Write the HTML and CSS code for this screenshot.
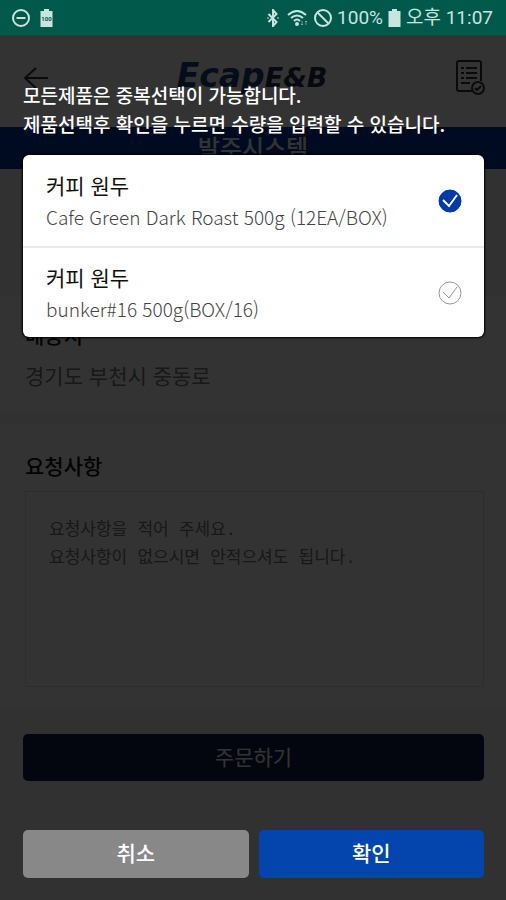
FILE: index.html
```html
<!DOCTYPE html>
<html lang="ko">
<head>
<meta charset="utf-8">
<meta name="viewport" content="width=device-width, initial-scale=1">
<title>발주시스템</title>
<link rel="stylesheet" href="styles.css">
</head>
<body>
<div class="status-bar">
  <div class="status-group">
    <svg class="status-ring" viewBox="0 0 18 18" aria-hidden="true"><circle cx="9" cy="9" r="8"/><path d="M4.500 9h9"/></svg>
    <span class="battery-badge"><svg viewBox="0 0 13 18" aria-hidden="true"><path d="M4 0h5v2h3.500v16H.5V2H4z"/></svg><span class="battery-label">100</span></span>
  </div>
  <div class="status-group status-right">
    <svg class="bluetooth" viewBox="0 0 12 18" aria-hidden="true"><path d="M1.500 5l8 8L6 17V1l3.500 4-8 8"/><path d="M.5 9h1M10.500 9h1"/></svg>
    <svg class="wifi" viewBox="0 0 22 18" aria-hidden="true"><path d="M1 6q9-8 18 0M4 9q6-5 12 0M7 12q3-3 6 0"/><circle cx="10" cy="15" r="1"/><path class="wifi-arrows" d="M15 12v4m-1-1l1 1 1-1M19 16v-4m-1 1l1-1 1 1"/></svg>
    <svg class="status-ring" viewBox="0 0 18 18" aria-hidden="true"><circle cx="9" cy="9" r="8"/><path d="M3.500 3.500l11 11"/></svg>
    <span>100%</span>
    <svg class="battery" viewBox="0 0 13 18" aria-hidden="true"><path d="M4 0h5v2h3.500v16H.5V2H4z"/></svg>
    <span>오후 11:07</span>
  </div>
</div>
<div class="screen">
  <div class="page">
    <header class="app-header">
      <button class="icon-button" type="button" aria-label="뒤로"><svg class="back-icon" viewBox="0 0 26 24"><path d="M25 13H2M13 3L2 13l11 10"/></svg></button>
      <div class="logo"><span class="logo-name">Ecap</span><span class="logo-suffix">E&amp;B</span></div>
      <button class="icon-button" type="button" aria-label="주문내역"><svg class="list-icon" viewBox="0 0 30 36"><path d="M17 32H4q-2 0-2-2V4q0-2 2-2h20q2 0 2 2v18M6 9h3M11 9h11M6 14h3M11 14h11M6 19h3M11 19h11M6 24h9"/><circle cx="23" cy="29" r="6"/><path d="M20 29l2 2 4-4"/></svg></button>
    </header>
    <h1 class="banner">발주시스템</h1>
    <div class="product-space"></div>
    <section class="section address">
      <h2>배송지</h2>
      <p>경기도 부천시 중동로</p>
    </section>
    <section class="section request">
      <h2><label for="request">요청사항</label></h2>
      <textarea id="request" placeholder="요청사항을 적어 주세요.&#10;요청사항이 없으시면 안적으셔도 됩니다."></textarea>
    </section>
    <div class="order-row"><button class="order-button" type="button">주문하기</button></div>
  </div>
  <div class="overlay" role="dialog" aria-modal="true" aria-labelledby="guide">
    <p class="guide" id="guide">모든제품은 중복선택이 가능합니다.<br>제품선택후 확인을 누르면 수량을 입력할 수 있습니다.</p>
    <div class="product-list">
      <label class="product">
        <span class="product-text"><span class="product-name">커피 원두</span><span class="product-detail">Cafe Green Dark Roast 500g (12EA/BOX)</span></span>
        <input class="check-input" type="checkbox" checked>
        <svg class="check" viewBox="0 0 24 24" aria-hidden="true"><circle cx="12" cy="12" r="11"/><path d="M5 11l6 6 8-11"/></svg>
      </label>
      <label class="product">
        <span class="product-text"><span class="product-name">커피 원두</span><span class="product-detail">bunker#16 500g(BOX/16)</span></span>
        <input class="check-input" type="checkbox">
        <svg class="check" viewBox="0 0 24 24" aria-hidden="true"><circle cx="12" cy="12" r="11"/><path d="M5 11l6 6 8-11"/></svg>
      </label>
    </div>
    <div class="actions">
      <button class="cancel" type="button">취소</button>
      <button class="confirm" type="button">확인</button>
    </div>
  </div>
</div>
</body>
</html>
```
FILE: styles.css
```css
* { box-sizing: border-box; }
body {
  margin: 0;
  min-height: 100vh;
  display: flex;
  flex-direction: column;
  font-family: "Noto Sans CJK KR", sans-serif;
  color: #111;
}
h1, h2, p { margin: 0; }
button { border: 0; padding: 0; font: inherit; }
svg { display: block; fill: none; stroke: currentColor; }

.status-bar {
  display: flex;
  justify-content: space-between;
  align-items: center;
  height: 35px;
  padding: 0 13px 0 12px;
  background: #00594b;
  color: #c9e5e0;
  font-family: Roboto, "Noto Sans CJK KR", sans-serif;
  font-size: 19px;
  line-height: 22px;
}
.status-group { display: flex; align-items: center; gap: 10px; }
.status-right { gap: 5px; }
.status-ring { width: 18px; height: 18px; stroke-width: 2; }
.battery-badge { position: relative; }
.battery-badge svg, .battery { width: 13px; height: 18px; fill: currentColor; stroke: none; }
.battery-label {
  position: absolute;
  inset: 6px 0 auto;
  text-align: center;
  font-size: 6px;
  line-height: 8px;
  font-weight: 700;
  color: #00594b;
}
.bluetooth { width: 12px; height: 18px; stroke-width: 2; margin-right: 3px; }
.wifi { width: 22px; height: 18px; stroke-width: 2; }
.wifi-arrows { stroke-width: 1; opacity: .5; }

.screen {
  position: relative;
  flex: 1;
  display: flex;
  flex-direction: column;
}
.page {
  flex: 1;
  display: flex;
  flex-direction: column;
  background: #f2f2f2;
}
.app-header {
  display: flex;
  justify-content: space-between;
  align-items: center;
  height: 92px;
  padding: 0 21px 8px 23px;
  background: #fff;
}
.icon-button { background: none; color: #333; }
.back-icon { width: 26px; height: 24px; stroke-width: 2; }
.list-icon { width: 30px; height: 36px; stroke-width: 2; }
.logo {
  display: flex;
  align-items: baseline;
  font-family: "DejaVu Sans", sans-serif;
  font-style: italic;
  font-weight: 700;
  line-height: 40px;
  color: #1c3c84;
}
.logo-name { font-size: 33px; }
.logo-suffix { font-size: 27px; color: #26304f; }
.banner {
  height: 42px;
  background: #0032a0;
  color: #fff;
  text-align: center;
  font-size: 24px;
  line-height: 40px;
  font-weight: 500;
}
.product-space { height: 126px; }
.section { background: #fff; padding: 0 22px 0 25px; }
.section h2 { font-size: 21px; line-height: 30px; font-weight: 500; }
.address { height: 118px; padding-top: 24px; }
.address p { margin-top: 11px; font-size: 21px; line-height: 30px; color: #777; }
.request { margin-top: 12px; height: 284px; padding-top: 25px; }
.request textarea {
  display: block;
  width: 100%;
  height: 196px;
  margin-top: 11px;
  padding: 25px 23px;
  border: 1px solid #e2e2e2;
  background: transparent;
  resize: none;
  font-family: "Liberation Mono", "Noto Sans CJK KR", monospace;
  font-size: 17px;
  line-height: 28px;
}
.request textarea::placeholder { color: #777; opacity: 1; }
.order-row { padding: 25px 22px 0 23px; }
.order-button {
  width: 100%;
  height: 47px;
  padding-bottom: 4px;
  border-radius: 5px;
  background: #0f1e4b;
  color: #fff;
  font-size: 21px;
}

.overlay {
  position: absolute;
  inset: 0;
  display: flex;
  flex-direction: column;
  padding: 45px 22px 22px 23px;
  background: rgba(0, 0, 0, .8);
}
.guide {
  color: #fff;
  font-size: 19px;
  line-height: 29px;
  font-weight: 500;
}
.product-list {
  margin-top: 17px;
  background: #fff;
  border-radius: 6px;
  box-shadow: 0 0 2px 1px #000;
}
.product {
  display: flex;
  align-items: center;
  justify-content: space-between;
  height: 91px;
  padding: 0 22px 0 23px;
}
.product + .product { border-top: 2px solid #ebebeb; }
.product-text { display: flex; flex-direction: column; }
.product-name { font-size: 21px; line-height: 31px; }
.product-detail { font-size: 19px; line-height: 31px; font-weight: 300; color: #444; }
.check-input { position: absolute; opacity: 0; }
.check { width: 24px; height: 24px; color: #999; }
.check-input:checked + .check { color: #fff; }
.check-input:checked + .check circle { fill: #0039a9; stroke: #0039a9; }
.check-input:checked + .check path { stroke-width: 2; }
.actions { display: flex; gap: 10px; margin-top: auto; }
.actions button {
  flex: 1;
  height: 48px;
  padding-bottom: 4px;
  border-radius: 5px;
  color: #fff;
  font-size: 21px;
  font-weight: 500;
}
.actions .cancel { background: #888; }
.actions .confirm { background: #0345ad; }
```
